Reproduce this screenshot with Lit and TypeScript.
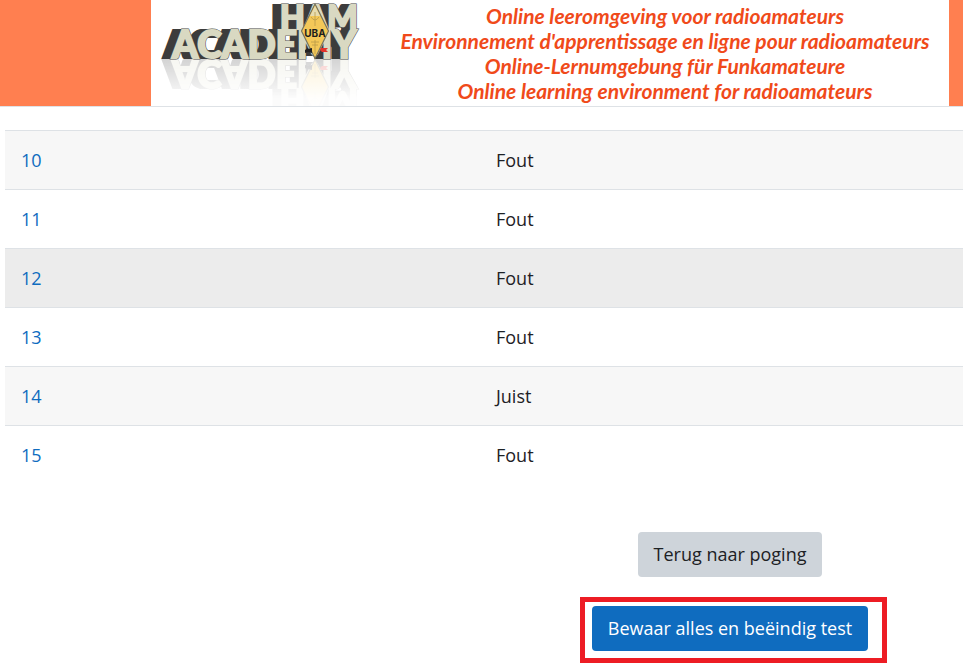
import { LitElement, html, svg, css } from "lit";
import { customElement } from "lit/decorators.js";
import { classMap } from "lit/directives/class-map.js";

@customElement("ham-logo")
class HamLogo extends LitElement {
  static styles = css`
    :host {
      display: block;
      flex: none;
      width: 230px;
    }
    svg {
      display: block;
    }
    .word {
      font-family: Lato, "Liberation Sans", sans-serif;
      font-weight: 900;
    }
    .top {
      font-size: 32px;
    }
    .bottom {
      font-size: 37px;
    }
    .depth {
      fill: #3c3c3c;
      stroke: #3c3c3c;
      stroke-width: 2;
    }
    .face {
      fill: #d9d9c2;
      stroke: #d9d9c2;
      stroke-width: 2;
    }
    .rim {
      fill: #4a4a48;
      stroke: #4a4a48;
      stroke-width: 3;
    }
    .uba {
      font: 700 10px Inter, "Liberation Sans", sans-serif;
      fill: #1c1c1c;
      text-anchor: middle;
    }
  `;

  render() {
    const depth = [9, 8, 7, 6, 5, 4, 3, 2, 1];
    return html`
      <svg width="230" height="106" viewBox="0 0 230 106" role="img" aria-label="HAM Academy UBA">
        <defs>
          <g id="words" class="word">
            <text class="top" x="129" y="29">HAM</text>
            <text class="bottom" x="21" y="58">ACADEMY</text>
          </g>
          <linearGradient id="fade" x1="0" y1="58" x2="0" y2="20" gradientUnits="userSpaceOnUse">
            <stop offset="0" stop-color="#fff" stop-opacity="0.22" />
            <stop offset="1" stop-color="#fff" stop-opacity="0.02" />
          </linearGradient>
          <mask id="fade-mask" maskUnits="userSpaceOnUse" x="0" y="0" width="230" height="60">
            <rect width="230" height="60" fill="url(#fade)" />
          </mask>
          <g id="mark">
            <g class="depth">${depth.map((d) => svg`<use href="#words" x=${-d} />`)}</g>
            <use href="#words" class="rim" />
            <use href="#words" class="face" />
            <path d="M164 4 L177.500 31 L164 58.500 L150.500 31 Z" fill="#f3c858" stroke="#77745f" stroke-width="1.200" />
            <path d="M164 6 L169 16 L159 16 Z" fill="#e6dcb0" />
            <path
              d="M164 12 V26 M160 17 Q164 23 168 17 M164 40 V54 M160 42 H168 M161 45 H167"
              fill="none"
              stroke="#b89a4a"
              stroke-width="0.800"
            />
            <path d="M154 50 L157 48 L157 49 L161 48 V53 L157 52 L154 53 Z" fill="#222" />
            <path d="M170 48 H177 L175 50 L177 52 H171 L169 50 Z" fill="#e4332b" />
          </g>
        </defs>
        <g transform="translate(0 118) scale(1 -1)">
          <g mask="url(#fade-mask)"><use href="#mark" /></g>
        </g>
        <use href="#mark" />
        <text class="uba" x="164" y="37">UBA</text>
      </svg>
    `;
  }
}

@customElement("app-root")
class AppRoot extends LitElement {
  static styles = css`
    :host {
      display: block;
      font: 18px/26px "Open Sans", "Noto Sans", sans-serif;
      color: #1d2125;
      background: #fff;
    }
    .banner {
      padding: 0 14px 0 151px;
      background: #ff7f50;
      border-bottom: 1px solid #dee2e6;
    }
    .panel {
      display: flex;
      align-items: center;
      background: #fff;
    }
    .slogans {
      flex: 1;
      padding: 3px 0;
      text-align: center;
      font: italic 700 21px/25px Lato, "Liberation Sans", sans-serif;
      color: #f04a1a;
      white-space: nowrap;
    }
    .slogans p {
      margin: 0;
    }
    main {
      padding: 23px 0 16px 5px;
    }
    table {
      width: 100%;
      table-layout: fixed;
      border-spacing: 0;
    }
    .number {
      width: 443px;
    }
    td,
    th {
      padding: 16px;
      border-top: 1px solid #dee2e6;
      font-weight: 400;
      text-align: left;
    }
    .plain {
      background: #fff;
    }
    .shaded {
      background: #f7f7f7;
    }
    .current {
      background: #ececec;
    }
    a {
      color: #0f6cbf;
      text-decoration: none;
    }
    .actions {
      display: flex;
      flex-direction: column;
      align-items: center;
      gap: 29px;
      margin-top: 48px;
      padding-left: 492px;
    }
    button {
      padding: 10px 16px;
      border: 0;
      border-radius: 4px;
      font: inherit;
      line-height: 25px;
      white-space: nowrap;
    }
    .back {
      background: #ced4da;
      color: #1d2125;
    }
    .finish {
      background: #0f6cbf;
      color: #fff;
    }
    .marked {
      position: relative;
      display: flex;
    }
    .marked::after {
      content: "";
      position: absolute;
      inset: -9px -19px -12px -12px;
      border: 5px solid #ed1c24;
      pointer-events: none;
    }
  `;

  private slogans = [
    "Online leeromgeving voor radioamateurs",
    "Environnement d'apprentissage en ligne pour radioamateurs",
    "Online-Lernumgebung für Funkamateure",
    "Online learning environment for radioamateurs",
  ];

  private rows = [
    { number: 10, status: "Fout", tone: "shaded" },
    { number: 11, status: "Fout", tone: "plain" },
    { number: 12, status: "Fout", tone: "current" },
    { number: 13, status: "Fout", tone: "plain" },
    { number: 14, status: "Juist", tone: "shaded" },
    { number: 15, status: "Fout", tone: "plain" },
  ];

  render() {
    return html`
      <header class="banner">
        <div class="panel">
          <ham-logo></ham-logo>
          <div class="slogans">${this.slogans.map((s) => html`<p>${s}</p>`)}</div>
        </div>
      </header>
      <main>
        <table>
          <tbody>
            ${this.rows.map(
              (r) => html`
                <tr class=${classMap({ [r.tone]: true })}>
                  <th class="number" scope="row"><a href="#vraag-${r.number}">${r.number}</a></th>
                  <td>${r.status}</td>
                </tr>
              `
            )}
          </tbody>
        </table>
        <div class="actions">
          <button class="back" type="button">Terug naar poging</button>
          <div class="marked">
            <button class="finish" type="submit">Bewaar alles en beëindig test</button>
          </div>
        </div>
      </main>
    `;
  }
}
